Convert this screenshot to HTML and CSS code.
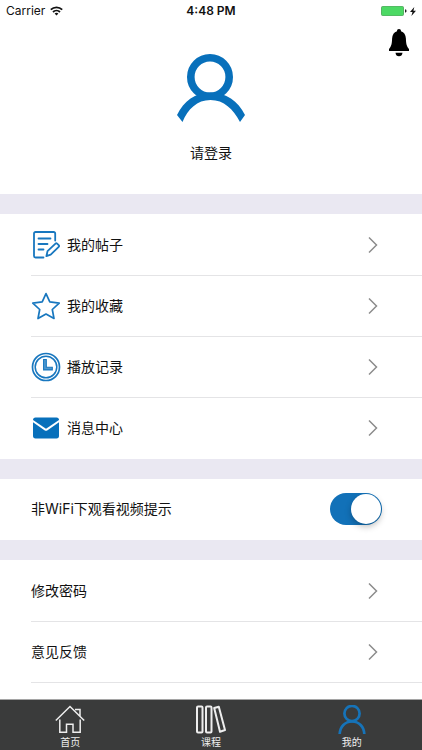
FILE: index.html
```html
<!DOCTYPE html>
<html lang="zh-CN">
<head>
<meta charset="utf-8">
<meta name="viewport" content="width=device-width, initial-scale=1">
<title>我的</title>
<link rel="stylesheet" href="styles.css">
</head>
<body>
<div class="app">
  <header class="status">
    <div class="carrier">
      <span>Carrier</span>
      <svg width="13" height="10" viewBox="0 0 13 10" fill="none" stroke="#111" stroke-width="1.8"><path d="M.8 3.7a8.2 8.2 0 0 1 11.4 0M3 6a5 5 0 0 1 7 0"/><path d="M6.5 9.6 4.6 7.6a2.7 2.7 0 0 1 3.8 0z" fill="#111" stroke="none"/></svg>
    </div>
    <time class="clock">4:48 PM</time>
    <div class="power">
      <svg width="26" height="10" viewBox="0 0 26 10"><rect width="23" height="10" rx="2" fill="#5b9c62"/><rect x=".6" y=".6" width="21.8" height="8.8" rx="1.5" fill="#4cd964"/><path d="M24 3.3q1.6.3 1.6 1.7T24 6.7z" fill="#222"/></svg>
      <svg width="6" height="9" viewBox="0 0 6 9"><path d="M4.3 0 0 5h2.5L1.4 9 6 3.7H3.4z" fill="#111"/></svg>
    </div>
  </header>

  <main class="content">
    <section class="profile">
      <button class="bell" aria-label="通知">
        <svg width="20" height="28" viewBox="0 0 20 28"><path d="M10 0c1.3 0 2 .8 2 2.2 3 .9 4.700 3.600 4.900 7.300.2 5.400.7 7.700 3.100 10.400V22H0v-2.100c2.400-2.700 2.900-5 3.100-10.400C3.300 5.800 5 3.100 8 2.200 8 .8 8.700 0 10 0zM6.500 23.700h7c-.2 2.300-1.500 3.600-3.500 3.600s-3.300-1.300-3.500-3.600z"/></svg>
      </button>
      <a class="login" href="#login">
        <svg width="68" height="68" viewBox="0 0 68 68"><circle cx="33" cy="23" r="19.200" fill="none" stroke="#0870bb" stroke-width="7.600"/><path d="M0 61C7 47 18 38.500 33.500 38.500S61 47 68 61l-5 7C56 55 47 46 33.500 46S11 55 5.500 68z" fill="#0870bb"/></svg>
        <span>请登录</span>
      </a>
    </section>

    <nav class="group">
      <a class="row" href="#posts">
        <svg class="icon" viewBox="0 0 30 30" fill="none" stroke="#1877bf" stroke-width="1.800" stroke-linecap="round" stroke-linejoin="round"><path d="M24.200 10.500V3.500a1.500 1.500 0 0 0-1.500-1.500H4.500A1.500 1.500 0 0 0 3 3.500v22.500A1.500 1.500 0 0 0 4.500 27.500h8M7.500 8.500h12M7.500 14h9M7.500 19.500h5"/><path d="m16.500 21.200 8-7.600q.8-.7 1.600 0l1.600 1.600q.8.800 0 1.600l-8 7.800-4.300 1.500z"/></svg>
        <span>我的帖子</span>
        <svg class="arrow" viewBox="0 0 10 18"><path d="m1 1.500 7.500 7.500L1 16.500"/></svg>
      </a>
      <a class="row" href="#favorites">
        <svg class="icon" viewBox="0 0 30 30" fill="none" stroke="#1877bf" stroke-width="1.700" stroke-linejoin="round"><path d="m15 2.600 3.800 8.300 9.400 1.200-6.900 6.400 1.700 9-8-4.500-8 4.500 1.700-9-6.900-6.400 9.400-1.200z"/></svg>
        <span>我的收藏</span>
        <svg class="arrow" viewBox="0 0 10 18"><path d="m1 1.500 7.500 7.500L1 16.500"/></svg>
      </a>
      <a class="row" href="#history">
        <svg class="icon" viewBox="0 0 30 30" fill="none" stroke="#1877bf"><circle cx="15" cy="15" r="13.500" stroke-width="1.700"/><circle cx="15" cy="15" r="10.800" stroke-width="1.500"/><path d="M12.600 7.500h2.700v7.800h6v2.600h-8.700z" fill="#5299cf" stroke-width="1.100"/></svg>
        <span>播放记录</span>
        <svg class="arrow" viewBox="0 0 10 18"><path d="m1 1.500 7.500 7.500L1 16.500"/></svg>
      </a>
      <a class="row" href="#messages">
        <svg class="icon" viewBox="0 0 30 30" fill="#0870bb"><path d="M4.500 4.500h21q2.500 0 2.500 2.500L15 15.800 2 7Q2 4.500 4.500 4.500z"/><path d="m2 9.200 11.800 8.200q1.200.800 2.400 0L28 9.200v13.600q0 2.700-2.500 2.700h-21Q2 25.500 2 22.800z"/></svg>
        <span>消息中心</span>
        <svg class="arrow" viewBox="0 0 10 18"><path d="m1 1.500 7.500 7.500L1 16.500"/></svg>
      </a>
    </nav>

    <section class="group">
      <div class="row">
        <label for="wifi">非WiFi下观看视频提示</label>
        <input class="switch" id="wifi" type="checkbox" role="switch" checked>
      </div>
    </section>

    <nav class="group">
      <a class="row" href="#password"><span>修改密码</span><svg class="arrow" viewBox="0 0 10 18"><path d="m1 1.500 7.500 7.500L1 16.500"/></svg></a>
      <a class="row" href="#feedback"><span>意见反馈</span><svg class="arrow" viewBox="0 0 10 18"><path d="m1 1.500 7.500 7.500L1 16.500"/></svg></a>
      <div class="row"></div>
    </nav>
  </main>

  <nav class="tabs">
    <a class="tab" href="#home">
      <svg viewBox="0 0 30 30" fill="none" stroke="#eee" stroke-width="1.500"><path d="m.8 15.500 14.200-14 14.200 14M4.800 14.500v12.700h6.700v-8h6.500v8h7.200V14.500M20 4.500h5v6.500"/></svg>
      <span>首页</span>
    </a>
    <a class="tab" href="#courses">
      <svg viewBox="0 0 30 30" fill="none" stroke="#eee" stroke-width="2" stroke-linejoin="round"><rect x="1" y="1.500" width="5.500" height="26" rx="1"/><rect x="10" y="1.500" width="5.500" height="26" rx="1"/><path d="m18.200 3 4.600-1.300L29 25l-5 1.800z"/></svg>
      <span>课程</span>
    </a>
    <a class="tab" href="#me" aria-current="page">
      <svg viewBox="0 0 30 30" fill="none" stroke="#1673b8" stroke-width="2.700"><circle cx="15" cy="8.500" r="7.600"/><path d="M2.700 29C3 21.500 8 16.500 15 16.500s12 5 12.300 12.500"/></svg>
      <span>我的</span>
    </a>
  </nav>
</div>
</body>
</html>
```
FILE: styles.css
```css
* { box-sizing: border-box; }

body {
  margin: 0;
  background: #fff;
  color: #111;
  font-family: Inter, "Noto Sans CJK SC", sans-serif;
  font-size: 14px;
  line-height: 20px;
}

svg { display: block; flex: none; }
a { color: inherit; text-decoration: none; }

.app {
  display: flex;
  flex-direction: column;
  height: 100vh;
}

.status {
  display: grid;
  grid-template-columns: 1fr auto 1fr;
  align-items: center;
  flex: none;
  height: 22px;
  padding: 0 6px;
  font-size: 12px;
}
.carrier, .power { display: flex; align-items: center; gap: 5px; }
.power { justify-content: flex-end; gap: 3px; }
.clock { font-weight: 600; }

.content {
  flex: 1;
  min-height: 0;
  overflow: hidden;
}

.profile {
  position: relative;
  padding: 32px 0 31px;
}
.login {
  display: flex;
  flex-direction: column;
  align-items: center;
  gap: 21px;
}
.bell {
  position: absolute;
  top: 7px;
  right: 13px;
  padding: 0;
  border: 0;
  background: none;
}

.group { border-top: 20px solid #eae8f2; }
nav.group { padding-top: 1px; }
.row {
  display: flex;
  align-items: center;
  gap: 6px;
  height: 61px;
  margin-left: 31px;
  padding-right: 44px;
  border-bottom: 1px solid #e4e4e6;
}
.group > .row:last-child { border-bottom-color: transparent; }
.icon { width: 30px; height: 30px; }
.arrow {
  width: 10px;
  height: 18px;
  margin-left: auto;
  fill: none;
  stroke: #8c8c8c;
  stroke-width: 1.5;
}

.switch {
  appearance: none;
  display: flex;
  width: 52px;
  height: 32px;
  margin: 0 -4px 0 auto;
  padding: 1px;
  border-radius: 16px;
  background: #bbb;
}
.switch::before {
  content: "";
  width: 30px;
  height: 30px;
  border-radius: 50%;
  background: #fff;
  box-shadow: 0 3px 6px rgba(0, 0, 0, .25);
}
.switch:checked { justify-content: flex-end; background: #1271b8; }

.tabs {
  display: flex;
  flex: none;
  border-top: 1px solid #a5a5a5;
  background: #3a3b3b;
  color: #eee;
  font-size: 10px;
  line-height: 14px;
}
.tab {
  display: flex;
  flex: 1;
  flex-direction: column;
  align-items: center;
  padding: 5px 0 1px;
}
.tab svg { width: 30px; height: 30px; }
```
